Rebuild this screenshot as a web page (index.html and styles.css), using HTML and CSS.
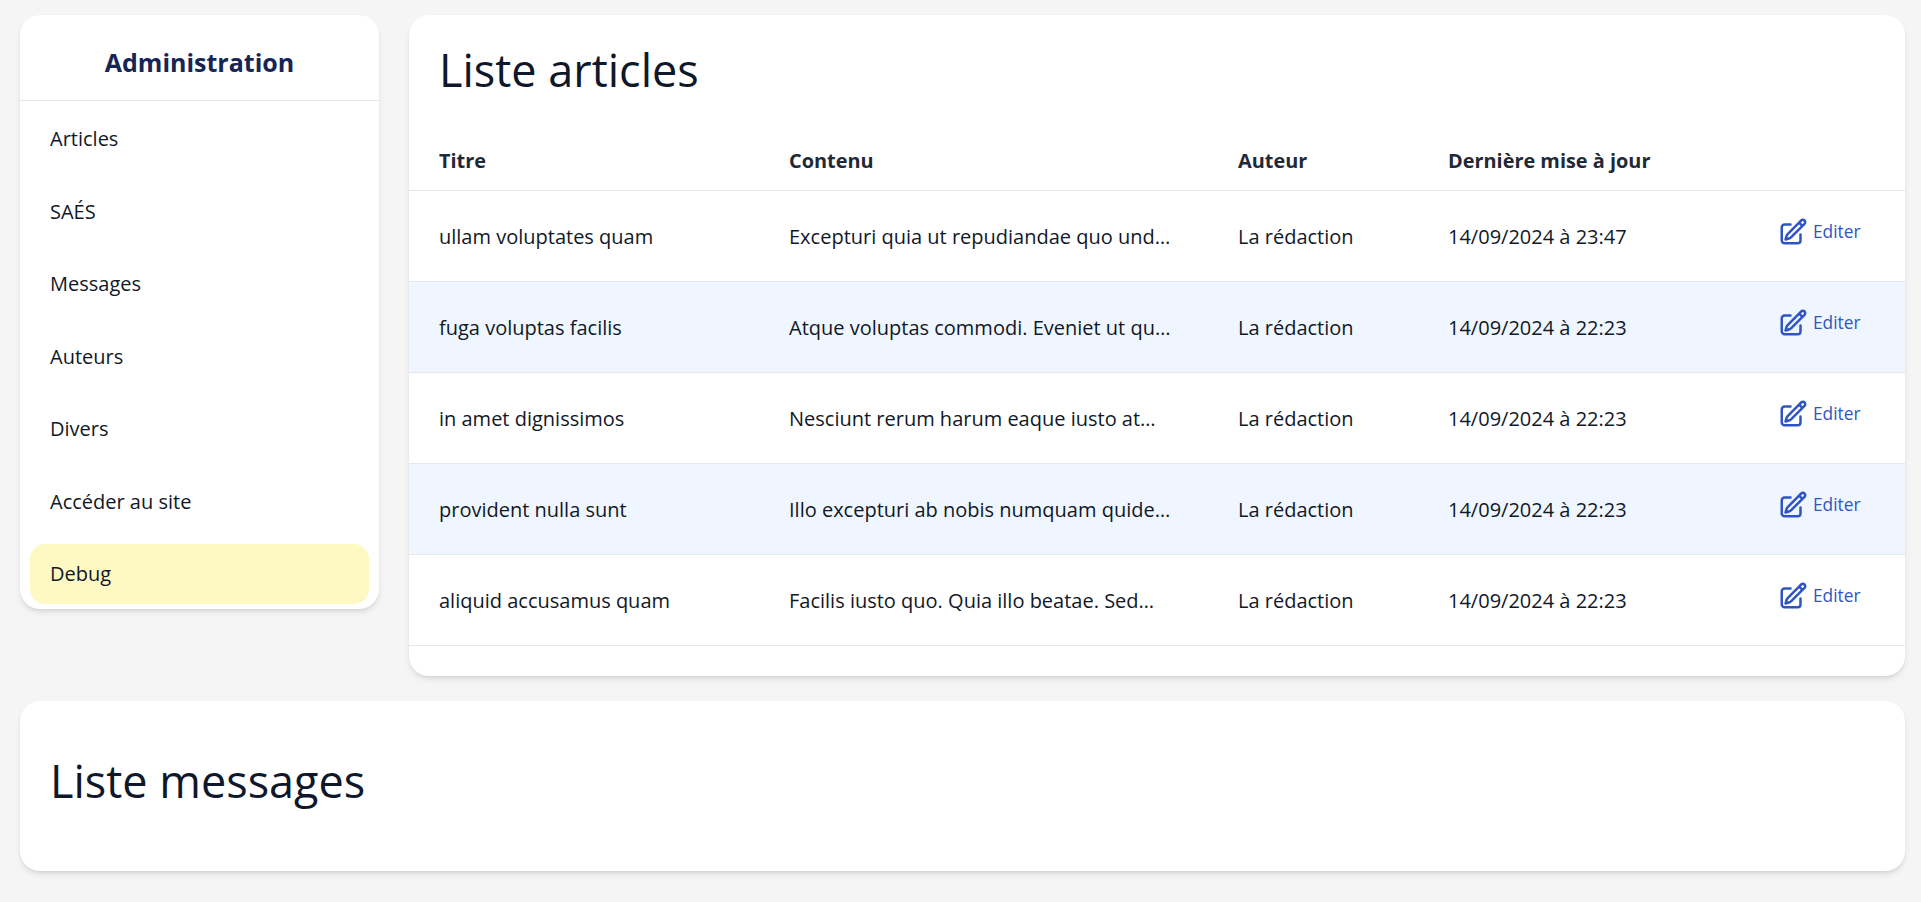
FILE: index.html
```html
<!DOCTYPE html>
<html>
  <head>
    <meta charset="UTF-8">
    <title>Administration</title>
    <link rel="stylesheet" href="styles.css">
  </head>
  <body>
    <svg class="sprite">
      <symbol id="icon-edit" viewBox="0 0 24 24" fill="none" stroke="currentColor" stroke-width="2" stroke-linecap="round" stroke-linejoin="round">
        <path d="m16.862 4.487 1.687-1.688a1.875 1.875 0 1 1 2.652 2.652L10.582 16.07a4.5 4.5 0 0 1-1.897 1.13L6 18l.8-2.685a4.5 4.5 0 0 1 1.13-1.897l8.932-8.931Zm0 0L19.5 7.125M18 14v4.75A2.25 2.25 0 0 1 15.75 21H5.25A2.25 2.25 0 0 1 3 18.75V8.25A2.25 2.25 0 0 1 5.25 6H10"/>
      </symbol>
    </svg>

    <div class="layout">
      <aside class="card menu">
        <h2 class="menu-title">Administration</h2>
        <ul class="menu-list">
          <li><a href="#">Articles</a></li>
          <li><a href="#">SAÉS</a></li>
          <li><a href="#">Messages</a></li>
          <li><a href="#">Auteurs</a></li>
          <li><a href="#">Divers</a></li>
          <li><a href="#">Accéder au site</a></li>
          <li><a href="#" class="debug">Debug</a></li>
        </ul>
      </aside>

      <main class="card articles">
        <h1 class="page-title">Liste articles</h1>
        <table class="table">
          <thead>
            <tr>
              <th class="col-title">Titre</th>
              <th class="col-content">Contenu</th>
              <th class="col-author">Auteur</th>
              <th class="col-date">Dernière mise à jour</th>
              <th></th>
            </tr>
          </thead>
          <tbody>
            <tr>
              <td>ullam voluptates quam</td>
              <td>Excepturi quia ut repudiandae quo und…</td>
              <td>La rédaction</td>
              <td>14/09/2024 à 23:47</td>
              <td><a href="#" class="edit"><svg class="edit-icon"><use href="#icon-edit"/></svg>Editer</a></td>
            </tr>
            <tr>
              <td>fuga voluptas facilis</td>
              <td>Atque voluptas commodi. Eveniet ut qu…</td>
              <td>La rédaction</td>
              <td>14/09/2024 à 22:23</td>
              <td><a href="#" class="edit"><svg class="edit-icon"><use href="#icon-edit"/></svg>Editer</a></td>
            </tr>
            <tr>
              <td>in amet dignissimos</td>
              <td>Nesciunt rerum harum eaque iusto at…</td>
              <td>La rédaction</td>
              <td>14/09/2024 à 22:23</td>
              <td><a href="#" class="edit"><svg class="edit-icon"><use href="#icon-edit"/></svg>Editer</a></td>
            </tr>
            <tr>
              <td>provident nulla sunt</td>
              <td>Illo excepturi ab nobis numquam quide…</td>
              <td>La rédaction</td>
              <td>14/09/2024 à 22:23</td>
              <td><a href="#" class="edit"><svg class="edit-icon"><use href="#icon-edit"/></svg>Editer</a></td>
            </tr>
            <tr>
              <td>aliquid accusamus quam</td>
              <td>Facilis iusto quo. Quia illo beatae. Sed…</td>
              <td>La rédaction</td>
              <td>14/09/2024 à 22:23</td>
              <td><a href="#" class="edit"><svg class="edit-icon"><use href="#icon-edit"/></svg>Editer</a></td>
            </tr>
          </tbody>
        </table>
      </main>

      <section class="card messages">
        <h1 class="page-title">Liste messages</h1>
      </section>
    </div>
  </body>
</html>
```

FILE: styles.css
```css
* {
  box-sizing: border-box;
  margin: 0;
  padding: 0;
}

body {
  font-family: "Open Sans", sans-serif;
  font-size: 20px;
  color: #111827;
  background-color: #f5f5f5;
  padding: 15px 16px 31px 20px;
}

a {
  color: inherit;
  text-decoration: none;
}

.sprite {
  display: none;
}

.layout {
  display: grid;
  grid-template-columns: 359px 1fr;
  column-gap: 30px;
  row-gap: 25px;
  align-items: start;
}

.card {
  background-color: #fff;
  border-radius: 20px;
  box-shadow: 0 4px 6px -1px rgba(0, 0, 0, 0.1), 0 2px 4px -2px rgba(0, 0, 0, 0.1);
}

/* menu */
.menu {
  padding-bottom: 5px;
}

.menu-title {
  font-size: 25px;
  font-weight: 700;
  line-height: 34px;
  color: #172554;
  text-align: center;
  padding: 30px 0 21px;
  border-bottom: 1px solid #e5e7eb;
}

.menu-list {
  list-style: none;
  padding: 8px 10px 0;
}

.menu-list a {
  display: block;
  height: 60px;
  line-height: 60px;
  padding-left: 20px;
  margin-bottom: 12.5px;
  border-radius: 15px;
}

.menu-list li:last-child a {
  margin-bottom: 0;
}

.debug {
  background-color: #fef9c3;
}

/* articles */
.articles {
  padding-bottom: 30px;
}

.page-title {
  font-size: 45px;
  font-weight: 400;
  line-height: 60px;
  color: #0f172a;
  padding: 0 30px;
}

.articles .page-title {
  padding-top: 25px;
  padding-bottom: 34px;
}

.table {
  width: 100%;
  border-collapse: collapse;
  table-layout: fixed;
}

.table th {
  font-size: 19.9px;
  font-weight: 700;
  text-align: left;
  height: 56px;
  padding: 0 0 2px 30px;
  color: #1f2937;
  border-bottom: 1px solid #e5e7eb;
}

.col-title {
  width: 350px;
}

.col-content {
  width: 449px;
}

.col-author {
  width: 210px;
}

.col-date {
  width: 330px;
}

.table td {
  height: 91px;
  padding: 2px 0 0 30px;
  white-space: nowrap;
  border-bottom: 1px solid #e5e7eb;
}

.table tbody tr:nth-child(even) {
  background-color: #eff6ff;
}

.edit {
  display: inline-flex;
  align-items: center;
  gap: 5px;
  font-size: 17.3px;
  color: #2f55c4;
  position: relative;
  top: -2px;
}

.edit-icon {
  width: 30px;
  height: 30px;
}

/* messages */
.messages {
  grid-column: 1 / -1;
  height: 170px;
  padding-top: 50px;
}
```
